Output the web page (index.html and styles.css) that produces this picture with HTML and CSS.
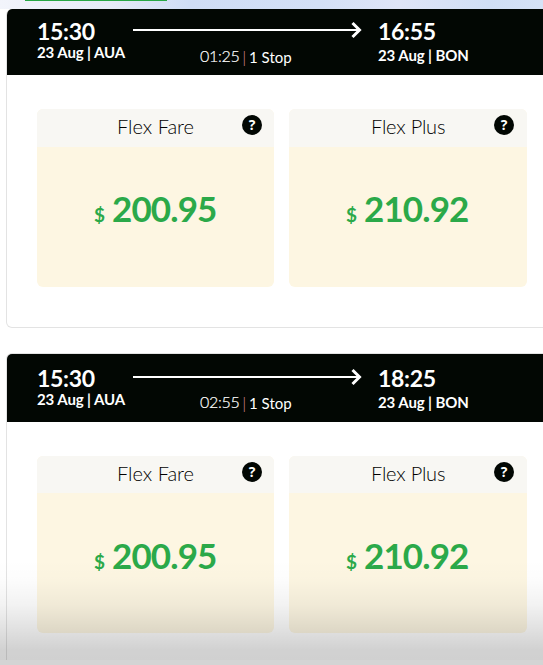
FILE: index.html
```html
<!DOCTYPE html>
<html lang="en">
<head>
    <meta charset="UTF-8">
    <meta name="viewport" content="width=device-width, initial-scale=1.0">
    <title>Select Flight</title>
    <link rel="stylesheet" href="styles.css">
</head>
<body>
    <div class="top-strip"><div class="active-tab"></div></div>

    <div class="flight first">
        <div class="flight-header">
            <div class="departure">
                <div class="time">15:30</div>
                <div class="place">23 Aug | AUA</div>
            </div>
            <div class="route">
                <svg class="arrow" width="229" height="20" viewBox="0 0 229 20" fill="none" stroke="#fff">
                    <path d="M0 10H226" stroke-width="2"/>
                    <path d="M219.5 3L226.5 10L219.5 17" stroke-width="3"/>
                </svg>
                <div class="duration"><span class="length">01:25</span> <span class="divider">|</span> <span class="stops">1 Stop</span></div>
            </div>
            <div class="arrival">
                <div class="time">16:55</div>
                <div class="place">23 Aug | BON</div>
            </div>
        </div>
        <div class="fares">
            <div class="fare">
                <div class="fare-name"><span class="name">Flex Fare</span> <span class="help">?</span></div>
                <div class="price"><span class="currency">$</span><span class="amount">200.95</span></div>
            </div>
            <div class="fare">
                <div class="fare-name"><span class="name">Flex Plus</span> <span class="help">?</span></div>
                <div class="price"><span class="currency">$</span><span class="amount">210.92</span></div>
            </div>
        </div>
    </div>

    <div class="flight second">
        <div class="flight-header">
            <div class="departure">
                <div class="time">15:30</div>
                <div class="place">23 Aug | AUA</div>
            </div>
            <div class="route">
                <svg class="arrow" width="229" height="20" viewBox="0 0 229 20" fill="none" stroke="#fff">
                    <path d="M0 10H226" stroke-width="2"/>
                    <path d="M219.5 3L226.5 10L219.5 17" stroke-width="3"/>
                </svg>
                <div class="duration"><span class="length">02:55</span> <span class="divider">|</span> <span class="stops">1 Stop</span></div>
            </div>
            <div class="arrival">
                <div class="time">18:25</div>
                <div class="place">23 Aug | BON</div>
            </div>
        </div>
        <div class="fares">
            <div class="fare">
                <div class="fare-name"><span class="name">Flex Fare</span> <span class="help">?</span></div>
                <div class="price"><span class="currency">$</span><span class="amount">200.95</span></div>
            </div>
            <div class="fare">
                <div class="fare-name"><span class="name">Flex Plus</span> <span class="help">?</span></div>
                <div class="price"><span class="currency">$</span><span class="amount">210.92</span></div>
            </div>
        </div>
    </div>

    <div class="page-fade"></div>
</body>
</html>
```
FILE: styles.css
```css
* {
    box-sizing: border-box;
}
body {
    margin: 0;
    height: 665px;
    overflow: hidden;
    background: #fff;
    font-family: Lato, sans-serif;
}
.top-strip {
    height: 9px;
    padding-left: 25px;
    background: linear-gradient(90deg, #f2f4fb 0, #e6ebf8 110px, #cfddf5 190px, #d3e0f6 320px, #dfe5f7 400px, #d0dff5 490px, #d5e2f6 543px);
}
.active-tab {
    width: 142px;
    height: 1px;
    background: #28a745;
}
.flight {
    width: 560px;
    margin-left: 6px;
    border: 1px solid #e3e3e3;
    border-radius: 6px;
    overflow: hidden;
}
.flight.first {
    height: 319px;
    border-top: 0;
}
.flight.second {
    height: 307px;
    margin-top: 25px;
    border-bottom: 0;
    border-radius: 6px 0 0 0;
}
.flight-header {
    display: flex;
    height: 66px;
    padding: 9px 0 0 30px;
    background: #020703;
    color: #fff;
}
.second .flight-header {
    height: 68px;
    padding-top: 11px;
}
.departure {
    width: 96px;
}
.route {
    width: 245px;
}
.time {
    height: 26px;
    font-size: 23px;
    line-height: 26px;
    font-weight: 700;
    letter-spacing: -.3px;
}
.place {
    font-size: 15px;
    line-height: 18px;
    font-weight: 700;
    letter-spacing: -.1px;
    white-space: nowrap;
}
.departure .place {
    margin-top: -1px;
}
.arrival .place {
    margin-top: 2px;
}
.arrow {
    display: block;
    margin-top: 2px;
}
.duration {
    display: flex;
    gap: 3px;
    align-items: flex-start;
    margin: 7px 0 0 67px;
    font-size: 15px;
    line-height: 20px;
}
.second .duration {
    margin-top: 6px;
}
.length, .divider {
    font-weight: 300;
}
.length {
    font-size: 16px;
    line-height: 18px;
    letter-spacing: -.3px;
    -webkit-text-stroke: .2px #fff;
}
.divider {
    color: #e8a0a0;
}
.fares {
    display: flex;
    gap: 15px;
    padding: 34px 0 0 30px;
}
.fare {
    width: 237px;
    height: 178px;
    border-radius: 6px;
    background: #fdf6e2;
    overflow: hidden;
}
.fare + .fare {
    width: 238px;
}
.fare-name {
    display: flex;
    justify-content: space-between;
    height: 38px;
    padding: 6px 12px 0 80px;
    background: #f8f7f3;
    color: #000;
    font-size: 20px;
    line-height: 24px;
    font-weight: 300;
}
.fare + .fare .fare-name {
    padding-left: 82px;
    padding-right: 13px;
}
.name {
    height: 24px;
    margin-top: -1px;
}
.fare + .fare .name {
    letter-spacing: -.2px;
}
.help {
    width: 20px;
    height: 20px;
    border-radius: 50%;
    background: #020703;
    color: #fff;
    font: 700 14px/20px "Open Sans", sans-serif;
    text-align: center;
}
.price {
    display: flex;
    align-items: baseline;
    gap: 7px;
    padding: 39px 0 0 57px;
    color: #2ba949;
    font-weight: 700;
}
.currency {
    font-size: 19px;
}
.amount {
    font-size: 35px;
    line-height: 44px;
    letter-spacing: -.9px;
}
.second .fare {
    height: 177px;
}
.second .fare-name {
    height: 37px;
}
.second .price {
    padding-top: 40px;
}
/* shade over the bottom of the list */
.page-fade {
    position: absolute;
    left: 0;
    right: 0;
    top: 560px;
    height: 105px;
    background: linear-gradient(rgba(0, 0, 0, 0) 0, rgba(0, 0, 0, .01) 20px, rgba(0, 0, 0, .05) 45px, rgba(0, 0, 0, .12) 70px, rgba(0, 0, 0, .18) 90px, rgba(0, 0, 0, .185) 100px, rgba(0, 0, 0, .17) 100px);
}
```
